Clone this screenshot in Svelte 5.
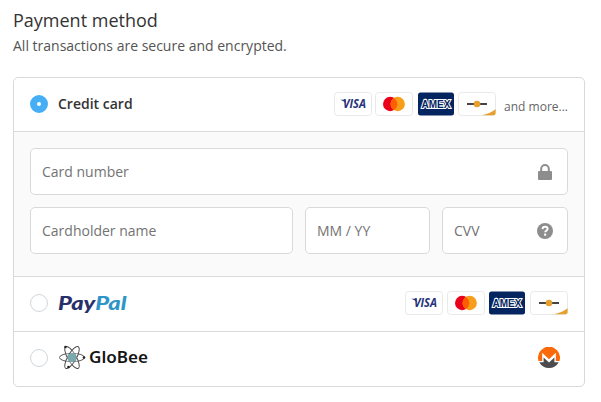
<script>
	let method = $state('card');
</script>

{#snippet cards()}
	<svg class="brand" viewBox="0 0 38 24" aria-label="Visa">
		<rect class="plate" x=".5" y=".5" width="37" height="23" rx="3" />
		<text class="visa" x="9" y="16" textLength="23" lengthAdjust="spacingAndGlyphs">VISA</text>
		<path d="M6.300 7.800h4.900l1.100 4C10.600 9.700 8.600 8.600 6.300 7.800z" fill="#26337a" />
	</svg>
	<svg class="brand" viewBox="0 0 38 24" aria-label="Mastercard">
		<rect class="plate" x=".5" y=".5" width="37" height="23" rx="3" />
		<circle cx="15.200" cy="12" r="7.200" fill="#eb001b" />
		<circle cx="22.700" cy="12" r="7.200" fill="#f79e1b" />
		<path d="M18.950 5.900a7.200 7.200 0 0 1 0 12.200a7.200 7.200 0 0 1 0-12.200z" fill="#ff5f00" />
	</svg>
	<svg class="brand" viewBox="0 0 38 24" aria-label="American Express">
		<rect x="1" y=".5" width="36" height="23" rx="2.500" fill="#04255f" />
		<text class="amex" x="4.500" y="16" textLength="29" lengthAdjust="spacingAndGlyphs">AMEX</text>
	</svg>
	<svg class="brand" viewBox="0 0 38 24" aria-label="Discover">
		<rect class="plate" x=".5" y=".5" width="37" height="23" rx="3" />
		<path d="M9 12h20" stroke="#454545" stroke-width="1.800" />
		<circle cx="19" cy="12" r="3.300" fill="#e6a02f" />
		<path d="M24 23.200c5-.8 9.800-2.900 13.600-5.900v3.900a2 2 0 0 1-2 2z" fill="#e6a02f" />
	</svg>
{/snippet}

<section>
	<h2>Payment method</h2>
	<p class="hint">All transactions are secure and encrypted.</p>

	<div class="methods">
		<label class="method">
			<input type="radio" name="method" value="card" bind:group={method} />
			<span class="name">Credit card</span>
			<span class="brands">
				{@render cards()}
				<span class="more">and more...</span>
			</span>
		</label>

		<div class="fields">
			<div class="field wide">
				<input type="text" placeholder="Card number" />
				<svg width="14" height="16" viewBox="0 0 14 16">
					<path d="M3.200 8V4.800a3.800 3.800 0 0 1 7.600 0V8" fill="none" stroke="#8d8d8d" stroke-width="2" />
					<rect x="0" y="7" width="14" height="9" rx="1" fill="#8d8d8d" />
				</svg>
			</div>
			<div class="field">
				<input type="text" placeholder="Cardholder name" />
			</div>
			<div class="field">
				<input type="text" placeholder="MM / YY" />
			</div>
			<div class="field">
				<input type="text" placeholder="CVV" />
				<svg class="help" width="16" height="16" viewBox="0 0 16 16">
					<circle cx="8" cy="8" r="8" fill="#8d8d8d" />
					<path d="M5.500 6.100C5.600 4.600 6.600 3.800 8.100 3.800c1.500 0 2.500.8 2.500 2 0 1.900-2.400 1.700-2.400 3.500" fill="none" stroke="#fff" stroke-width="1.900" />
					<rect x="7.100" y="10.600" width="2.100" height="2.100" rx=".5" fill="#fff" />
				</svg>
			</div>
		</div>

		<label class="method">
			<input type="radio" name="method" value="paypal" bind:group={method} />
			<svg class="logo" width="72" height="24" viewBox="0 0 72 24" aria-label="PayPal">
				<text class="paypal" x="0" y="18.500" textLength="68.500" lengthAdjust="spacingAndGlyphs">Pay<tspan fill="#2f95c8">Pal</tspan></text>
			</svg>
			<span class="brands">
				{@render cards()}
			</span>
		</label>

		<label class="method last">
			<input type="radio" name="method" value="globee" bind:group={method} />
			<svg class="logo" width="92" height="26" viewBox="0 0 92 26" aria-label="GloBee">
				<g fill="#fff" fill-opacity=".3" stroke="#444" stroke-width=".9">
					<ellipse cx="14" cy="12.500" rx="12.500" ry="4.200" transform="rotate(0 14 12.500)" />
					<ellipse cx="14" cy="12.500" rx="12.500" ry="4.200" transform="rotate(60 14 12.500)" />
					<ellipse cx="14" cy="12.500" rx="12.500" ry="4.200" transform="rotate(120 14 12.500)" />
				</g>
				<circle cx="14" cy="12.500" r="4.600" fill="#79a9ad" />
				<g fill="#222">
					<circle cx="7.500" cy="2" r="1.300" />
					<circle cx="26" cy="12.500" r="1.300" />
					<circle cx="10.500" cy="22" r="1.300" />
				</g>
				<text class="globee" x="31" y="18" textLength="59" lengthAdjust="spacingAndGlyphs">GloBee</text>
			</svg>
			<span class="brands coin">
				<svg width="22" height="22" viewBox="0 0 22 22" aria-label="Monero">
					<path d="M.5 14A11 11 0 1 1 21.500 14H17.800V5.800L11 12.300 4.200 5.800V14z" fill="#fb6a0a" />
					<path d="M1.300 15.300H5.600V10.500l2.700 2.600L11 15.500l2.700-2.400 2.700-2.600v4.800h4.300A11 11 0 0 1 1.300 15.300z" fill="#4c4c4c" />
				</svg>
			</span>
		</label>
	</div>
</section>

<style>
	:global(body) {
		background: #fff;
	}

	section {
		box-sizing: border-box;
		width: 601px;
		padding: 8px 16px 15px 13px;
		font-family: 'Open Sans', 'Noto Sans', sans-serif;
		font-size: 14px;
		color: #333;
	}

	h2 {
		margin: 0;
		font-size: 18px;
		font-weight: 400;
		line-height: 25px;
	}

	.hint {
		margin: 2px 0 21px;
		line-height: 21px;
		color: #545454;
	}

	.methods {
		border: 1px solid #d9d9d9;
		border-radius: 5px;
		overflow: hidden;
	}

	.method {
		display: flex;
		align-items: center;
		box-sizing: border-box;
		height: 54px;
		padding: 0 16px 2px;
		border-bottom: 1px solid #d9d9d9;
	}

	.fields + .method {
		height: 55px;
	}

	.method.last {
		height: 54px;
		border-bottom: 0;
	}

	input[type='radio'] {
		appearance: none;
		box-sizing: border-box;
		flex: none;
		width: 18px;
		height: 18px;
		margin: 0 10px 0 0;
		border: 1px solid #d0d7dc;
		border-radius: 50%;
		background: #fff;
	}

	input[type='radio']:checked {
		border: 7px solid #45aef5;
	}

	.name {
		font-weight: 600;
	}

	.brands {
		display: flex;
		align-items: center;
		gap: 3.500px;
		margin-left: auto;
	}

	.brand {
		flex: none;
		width: 38px;
		height: 24px;
	}

	.fields + .method .brands {
		margin-right: .5px;
	}

	.plate {
		fill: #fff;
		stroke: #e9e9e9;
	}

	.visa {
		font: italic 700 11.500px 'Open Sans', sans-serif;
		fill: #26337a;
	}

	.amex {
		font: 700 10px 'Liberation Sans', sans-serif;
		fill: #04255f;
		stroke: #fff;
		stroke-width: 2px;
		paint-order: stroke;
	}

	.more {
		margin: 5px 0 0 4.500px;
		font-size: 12px;
		color: #666;
	}

	.fields {
		display: grid;
		grid-template-columns: 263px 125px 126px;
		gap: 12px;
		padding: 16px 16px 22px;
		border-bottom: 1px solid #d9d9d9;
		background: #fafafa;
	}

	.field {
		display: flex;
		align-items: center;
		box-sizing: border-box;
		height: 47px;
		padding: 0 15px 0 11px;
		border: 1px solid #d9d9d9;
		border-radius: 5px;
		background: #fff;
	}

	.wide {
		grid-column: 1 / -1;
	}

	.field input {
		flex: 1;
		min-width: 0;
		padding: 0;
		border: 0;
		outline: 0;
		background: none;
		font: inherit;
	}

	.field input::placeholder {
		color: #737373;
	}

	.field svg {
		flex: none;
	}

	.field .help {
		margin-right: -1px;
	}

	.paypal {
		font: italic 900 19px Lato, sans-serif;
		fill: #28306b;
	}

	.globee {
		font: 600 16.500px 'Noto Sans', sans-serif;
		fill: #151515;
	}

	.coin {
		padding-right: 8px;
	}

	.coin svg {
		display: block;
	}
</style>
